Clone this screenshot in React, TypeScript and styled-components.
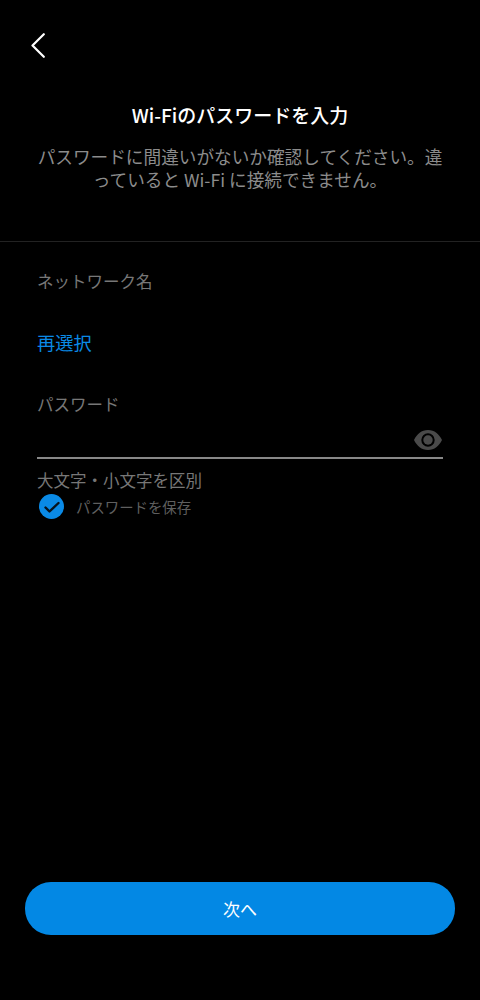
import React from 'react'
import styled, { createGlobalStyle } from 'styled-components'

const GlobalStyle = createGlobalStyle`
    html, body {
        margin: 0;
        padding: 0;
        background: #000;
    }
    body {
        font-family: "Noto Sans CJK JP", "Noto Sans", sans-serif;
    }
`

const Screen = styled.div`
    width: 480px;
    height: 1000px;
    background: #000;
    display: flex;
    flex-direction: column;
    overflow: hidden;
`

const Header = styled.header`
    height: 242px;
    padding: 33px 37px 0 31px;
    box-sizing: border-box;
    border-bottom: 1px solid #222;
    flex-shrink: 0;
`

const BackButton = styled.button`
    display: block;
    width: 14px;
    height: 25px;
    padding: 0;
    border: 0;
    background: none;
    color: #fff;
`

const Title = styled.h1`
    margin: 44px 0 0 6px;
    font-size: 19px;
    line-height: 26px;
    font-weight: 500;
    color: #fff;
    text-align: center;
`

const Description = styled.p`
    margin: 17px 0 0 6px;
    font-size: 17.65px;
    line-height: 23px;
    font-weight: 400;
    color: #8c8c8c;
    text-align: center;
    white-space: nowrap;
`

const Form = styled.main`
    flex: 1;
    padding: 27px 37px 0;
    display: flex;
    flex-direction: column;
`

const Label = styled.div`
    font-size: 16.5px;
    line-height: 24px;
    color: #777;
`

const LinkText = styled.a`
    margin-top: 36px;
    font-size: 18.2px;
    line-height: 26px;
    color: #0a8ae6;
`

const PasswordLabel = styled(Label)`
    margin-top: 37px;
`

const PasswordField = styled.div`
    height: 34px;
    border-bottom: 2px solid #888;
    display: flex;
    justify-content: flex-end;
    align-items: flex-end;
    padding: 0 1px 7px 0;
`

const CaseNote = styled(Label)`
    margin-top: 9px;
`

const SaveRow = styled.label`
    margin-top: 2px;
    display: flex;
    align-items: center;
    gap: 12px;
    padding-left: 2px;
`

const SaveText = styled.span`
    font-size: 14.4px;
    line-height: 25px;
    color: #5f5f5f;
`

const Footer = styled.footer`
    padding: 0 25px 65px;
`

const NextButton = styled.button`
    width: 100%;
    height: 53px;
    border: 0;
    border-radius: 26px;
    background: #0388e4;
    color: #fff;
    font-family: inherit;
    font-size: 17px;
    font-weight: 400;
`

const BackIcon = () => (
    <svg width="14" height="25" viewBox="0 0 14 25" fill="none" stroke="currentColor" strokeWidth="2.2" strokeLinecap="round" strokeLinejoin="round">
        <path d="M12.8 1.2 1.5 12.5l11.3 11.3" />
    </svg>
)

const EyeIcon = () => (
    <svg width="28" height="20" viewBox="0 0 28 20">
        <path fillRule="evenodd" fill="#4a4a4a" d="M14 0C20.500 0 25 4 28 10c-3 6-7.500 10-14 10S3 16 0 10C3 4 7.500 0 14 0Zm0 3.300a6.700 6.700 0 1 0 0 13.400 6.700 6.700 0 0 0 0-13.400Z" />
        <circle cx="14" cy="10" r="4.700" fill="#4a4a4a" />
    </svg>
)

const CheckIcon = () => (
    <svg width="25" height="25" viewBox="0 0 25 25">
        <circle cx="12.500" cy="12.500" r="12.500" fill="#0a8ae6" />
        <path d="M6.500 13.500l4 4 9-8.500" fill="none" stroke="#07131d" strokeWidth="2.400" strokeLinecap="round" strokeLinejoin="round" />
    </svg>
)

export default function App() {
    return (
        <Screen>
            <GlobalStyle />
            <Header>
                <BackButton aria-label="戻る">
                    <BackIcon />
                </BackButton>
                <Title>Wi-Fiのパスワードを入力</Title>
                <Description>
                    パスワードに間違いがないか確認してください。違
                    <br />
                    っていると Wi-Fi に接続できません。
                </Description>
            </Header>
            <Form>
                <Label>ネットワーク名</Label>
                <LinkText>再選択</LinkText>
                <PasswordLabel>パスワード</PasswordLabel>
                <PasswordField>
                    <EyeIcon />
                </PasswordField>
                <CaseNote>大文字・小文字を区別</CaseNote>
                <SaveRow>
                    <CheckIcon />
                    <SaveText>パスワードを保存</SaveText>
                </SaveRow>
            </Form>
            <Footer>
                <NextButton>次へ</NextButton>
            </Footer>
        </Screen>
    )
}
